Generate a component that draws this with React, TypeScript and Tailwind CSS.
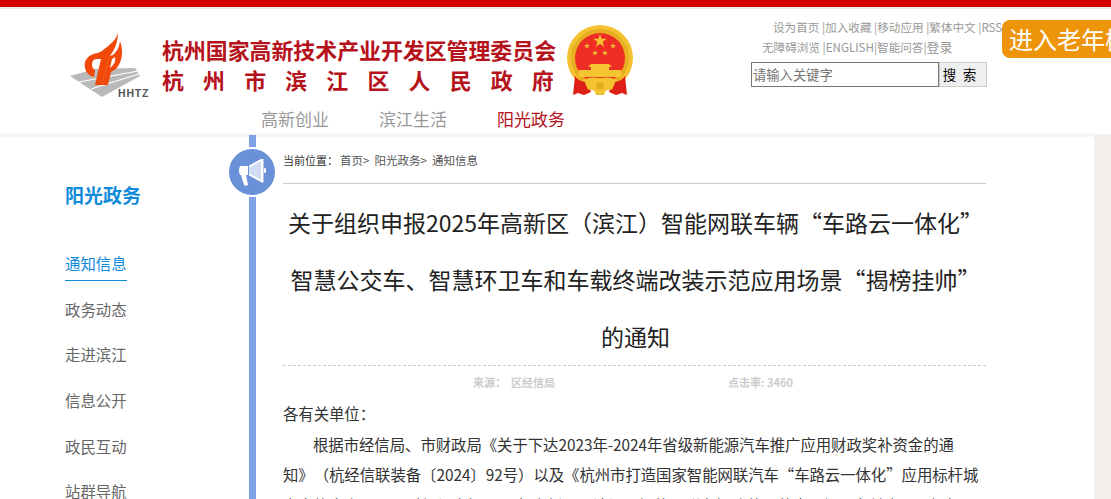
const cjk = { fontFamily: '"Noto Sans CJK SC","Liberation Sans",sans-serif' };

function star(cx: number, cy: number, r: number) {
  const pts: string[] = [];
  for (let i = 0; i < 10; i++) {
    const a = -Math.PI / 2 + (i * Math.PI) / 5;
    const d = i % 2 === 0 ? r : r * 0.4;
    pts.push(`${(cx + d * Math.cos(a)).toFixed(2)},${(cy + d * Math.sin(a)).toFixed(2)}`);
  }
  return pts.join(" ");
}

function Logo() {
  return (
    <svg width="90" height="80" viewBox="0 0 90 80" className="shrink-0">
      <path d="M5 51 L30 44 L70 43 L75 51 L37 72 Z" fill="#b9b9b9" />
      <path d="M14 57 L73 46 M26 64 L74 49" stroke="#fff" strokeWidth="1.200" fill="none" />
      <path d="M33 28 C24 29 18 35 20 43 C21 48 25 51 29 52 L30 45 C27 43 26 39 28 36 C29 34 31 34 33 34 Z" fill="#f2480a" />
      <path d="M53 7 C52 15 44 20 37 26 L33 28 L32 34 L36 34 L30 60 L37 60 L44 32 C48 27 53 20 53 7 Z" fill="#f2480a" />
      <path d="M48 30 C51 27 54 24 55 16 C59 27 57 37 51 44 L46 47 L43 60 L37 60 L44 31 Z" fill="#f2480a" />
      <path d="M47 34 L50 32 C51 36 49 40 45 43 Z" fill="#fff" />
      <text x="53" y="72" fontSize="10.500" fontWeight="700" fill="#555" letterSpacing="0.800" fontFamily="Liberation Sans">HHTZ</text>
    </svg>
  );
}

function Emblem() {
  return (
    <svg width="80" height="80" viewBox="0 0 80 80" className="shrink-0">
      <circle cx="40" cy="38" r="33" fill="#f2c230" />
      <circle cx="40" cy="38" r="29" fill="#e8ae22" />
      <circle cx="40" cy="38" r="25" fill="#ee2d24" />
      <polygon points={star(40, 21, 7)} fill="#f5c431" />
      <polygon points={star(27, 26, 3)} fill="#f5c431" />
      <polygon points={star(53, 26, 3)} fill="#f5c431" />
      <polygon points={star(35, 33, 3)} fill="#f5c431" />
      <polygon points={star(45, 33, 3)} fill="#f5c431" />
      <path d="M31 44 H49 L52 47 H49 V50 H61 V57 H19 V50 H31 V47 H28 Z" fill="#f5c431" />
      <path d="M15 56 C18 60 22 62 27 62 L31 72 L24 75 L18 73 L13 75 Z" fill="#dd1f16" />
      <path d="M65 56 C62 60 58 62 53 62 L49 72 L56 75 L62 73 L67 75 Z" fill="#dd1f16" />
      <path d="M24 60 C28 57 33 57 40 58 C47 57 52 57 56 60 L52 70 L47 68 L44 75 H36 L33 68 L28 70 Z" fill="#f5c431" />
      <circle cx="40" cy="66" r="4" fill="#e8ae22" />
    </svg>
  );
}

function Megaphone() {
  return (
    <svg width="28" height="28" viewBox="0 0 28 28">
      <path d="M2 8 H10 V17 H2 Q0 12.500 2 8 Z" fill="#fff" />
      <path d="M11 8 L24 1 V24 L11 17 Z" fill="#cfdcf4" />
      <path d="M23 1 H25.500 V24.500 H23 Z" fill="#fff" />
      <path d="M11 7.500 L23 1 V3 L11 9.500 Z M11 15.500 L23 22 V24 L11 17.500 Z" fill="#fff" />
      <rect x="26" y="10" width="2" height="5" rx="1" fill="#fff" />
      <path d="M3 17 H8 L10 27 C8 28 7 28 6 27 Z" fill="#fff" />
    </svg>
  );
}

export default function App() {
  const nav = ["政务动态", "走进滨江", "信息公开", "政民互动", "站群导航"];
  return (
    <div lang="zh-CN" className="h-[499px] w-[1111px] overflow-hidden bg-white [text-spacing-trim:space-all]" style={cjk}>
      <div className="h-[7px] bg-[#d40000]" />
      <div className="h-[2px] bg-[#e9e9ef]" />
      <header className="relative flex h-[125px] pl-[65px]">
        <div className="flex flex-col">
          <div className="flex h-[98px] items-start pt-[16px]">
            <Logo />
            <div className="ml-[7px] mt-[10px] w-[400px] font-bold text-[#b5121b]">
              <div className="whitespace-nowrap text-[21.900px] leading-[30px]">杭州国家高新技术产业开发区管理委员会</div>
              <div className="whitespace-nowrap text-[21.900px] leading-[30px] tracking-[19.200px]">杭州市滨江区人民政府</div>
            </div>
            <div className="ml-[-2px] mt-[-5px]"><Emblem /></div>
          </div>
          <nav className="ml-[196px] flex gap-[50px] text-[17px] leading-[24px]">
            <span className="text-[#999]">高新创业</span>
            <span className="text-[#999]">滨江生活</span>
            <span className="text-[#b5121b]">阳光政务</span>
          </nav>
        </div>
        <div className="ml-[111px] flex w-[250px] flex-col pt-[8px]">
          <div className="whitespace-nowrap pl-[22px] text-[11.600px] leading-[20px] text-[#999]">设为首页 |加入收藏 |移动应用 |繁体中文 |RSS</div>
          <div className="whitespace-nowrap pl-[11px] text-[11.600px] leading-[20px] text-[#999]">无障碍浏览 |ENGLISH|智能问答|<span className="text-[13px]">登录</span></div>
          <div className="mt-[5px] flex">
            <div className="flex h-[25px] w-[188px] items-center border border-[#767676] pl-px text-[13.300px] text-[#757575]">请输入关键字</div>
            <div className="flex h-[25px] w-[48px] items-center justify-center border border-[#ccc] bg-[#efefef] text-[13.300px] tracking-[7px] text-black">搜索</div>
          </div>
        </div>
        <div className="absolute left-[1002px] top-[11px] flex h-[38px] w-[109px] items-center overflow-hidden whitespace-nowrap rounded-l-[8px] bg-[#ed9409] pl-[7px] text-[24px] text-white">进入老年模式</div>
      </header>
      <div className="flex h-[365px] border-t border-[#f4f1ee] shadow-[inset_0_2px_0_#f9f7f5]">
        <aside className="w-[249px] shrink-0 pl-[65px] pt-[46px]">
          <div className="text-[19px] font-bold leading-[28px] text-[#0f8bdb]">阳光政务</div>
          <ul className="mt-[42px] text-[15.400px] leading-[24px] text-[#666]">
            <li className="h-[45.700px]"><span className="inline-block border-b border-[#0f8bdb] pb-[5px] text-[#0f8bdb]">通知信息</span></li>
            {nav.map((n) => (
              <li key={n} className="h-[45.700px]">{n}</li>
            ))}
          </ul>
        </aside>
        <div className="relative w-[7px] shrink-0 bg-[#7fa2e6]">
          <div className="absolute left-[-22px] top-[12px] flex h-[50px] w-[50px] items-center justify-center rounded-full border-2 border-white bg-[#6a90d8]">
            <Megaphone />
          </div>
        </div>
        <main className="ml-[27px] w-[703px] shrink-0">
          <div className="flex h-[49px] items-start border-b border-[#ccc] pt-[17px] text-[11.500px] leading-[16px] text-[#555]">
            <span className="w-[57px] shrink-0 whitespace-nowrap text-[11px] text-[#333]">当前位置：</span>
            <span>首页&gt;&nbsp; 阳光政务&gt;&nbsp; 通知信息</span>
          </div>
          <h1 className="border-b border-dashed border-[#ccc] pl-[2px] pt-[10px] text-center text-[23px] font-normal leading-[57px] text-[#222]">
            <div className="whitespace-nowrap">关于组织申报2025年高新区（滨江）智能网联车辆“车路云一体化”</div>
            <div className="whitespace-nowrap">智慧公交车、智慧环卫车和车载终端改装示范应用场景“揭榜挂帅”</div>
            <div>的通知</div>
          </h1>
          <div className="flex h-[32px] items-center pl-[190px] text-[11px] font-bold text-[#ccc]">
            <span className="w-[255px]">来源：&nbsp; 区经信局</span>
            <span>点击率: 3460</span>
          </div>
          <article className="pr-[4px] text-[15.400px] leading-[30.500px] tracking-[-0.050px] text-[#333]">
            <p>各有关单位：</p>
            <p className="indent-[30px]">根据市经信局、市财政局《关于下达2023年-2024年省级新能源汽车推广应用财政奖补资金的通知》（杭经信联装备〔2024〕92号）以及《杭州市打造国家智能网联汽车“车路云一体化”应用标杆城市实施方案》，现对组织申报2025年高新区（滨江）智能网联车辆改装示范应用场景有关事项通知如下：</p>
          </article>
        </main>
        <div className="ml-[108px] w-[17px] shrink-0 bg-[#f3efeb]" />
      </div>
    </div>
  );
}
